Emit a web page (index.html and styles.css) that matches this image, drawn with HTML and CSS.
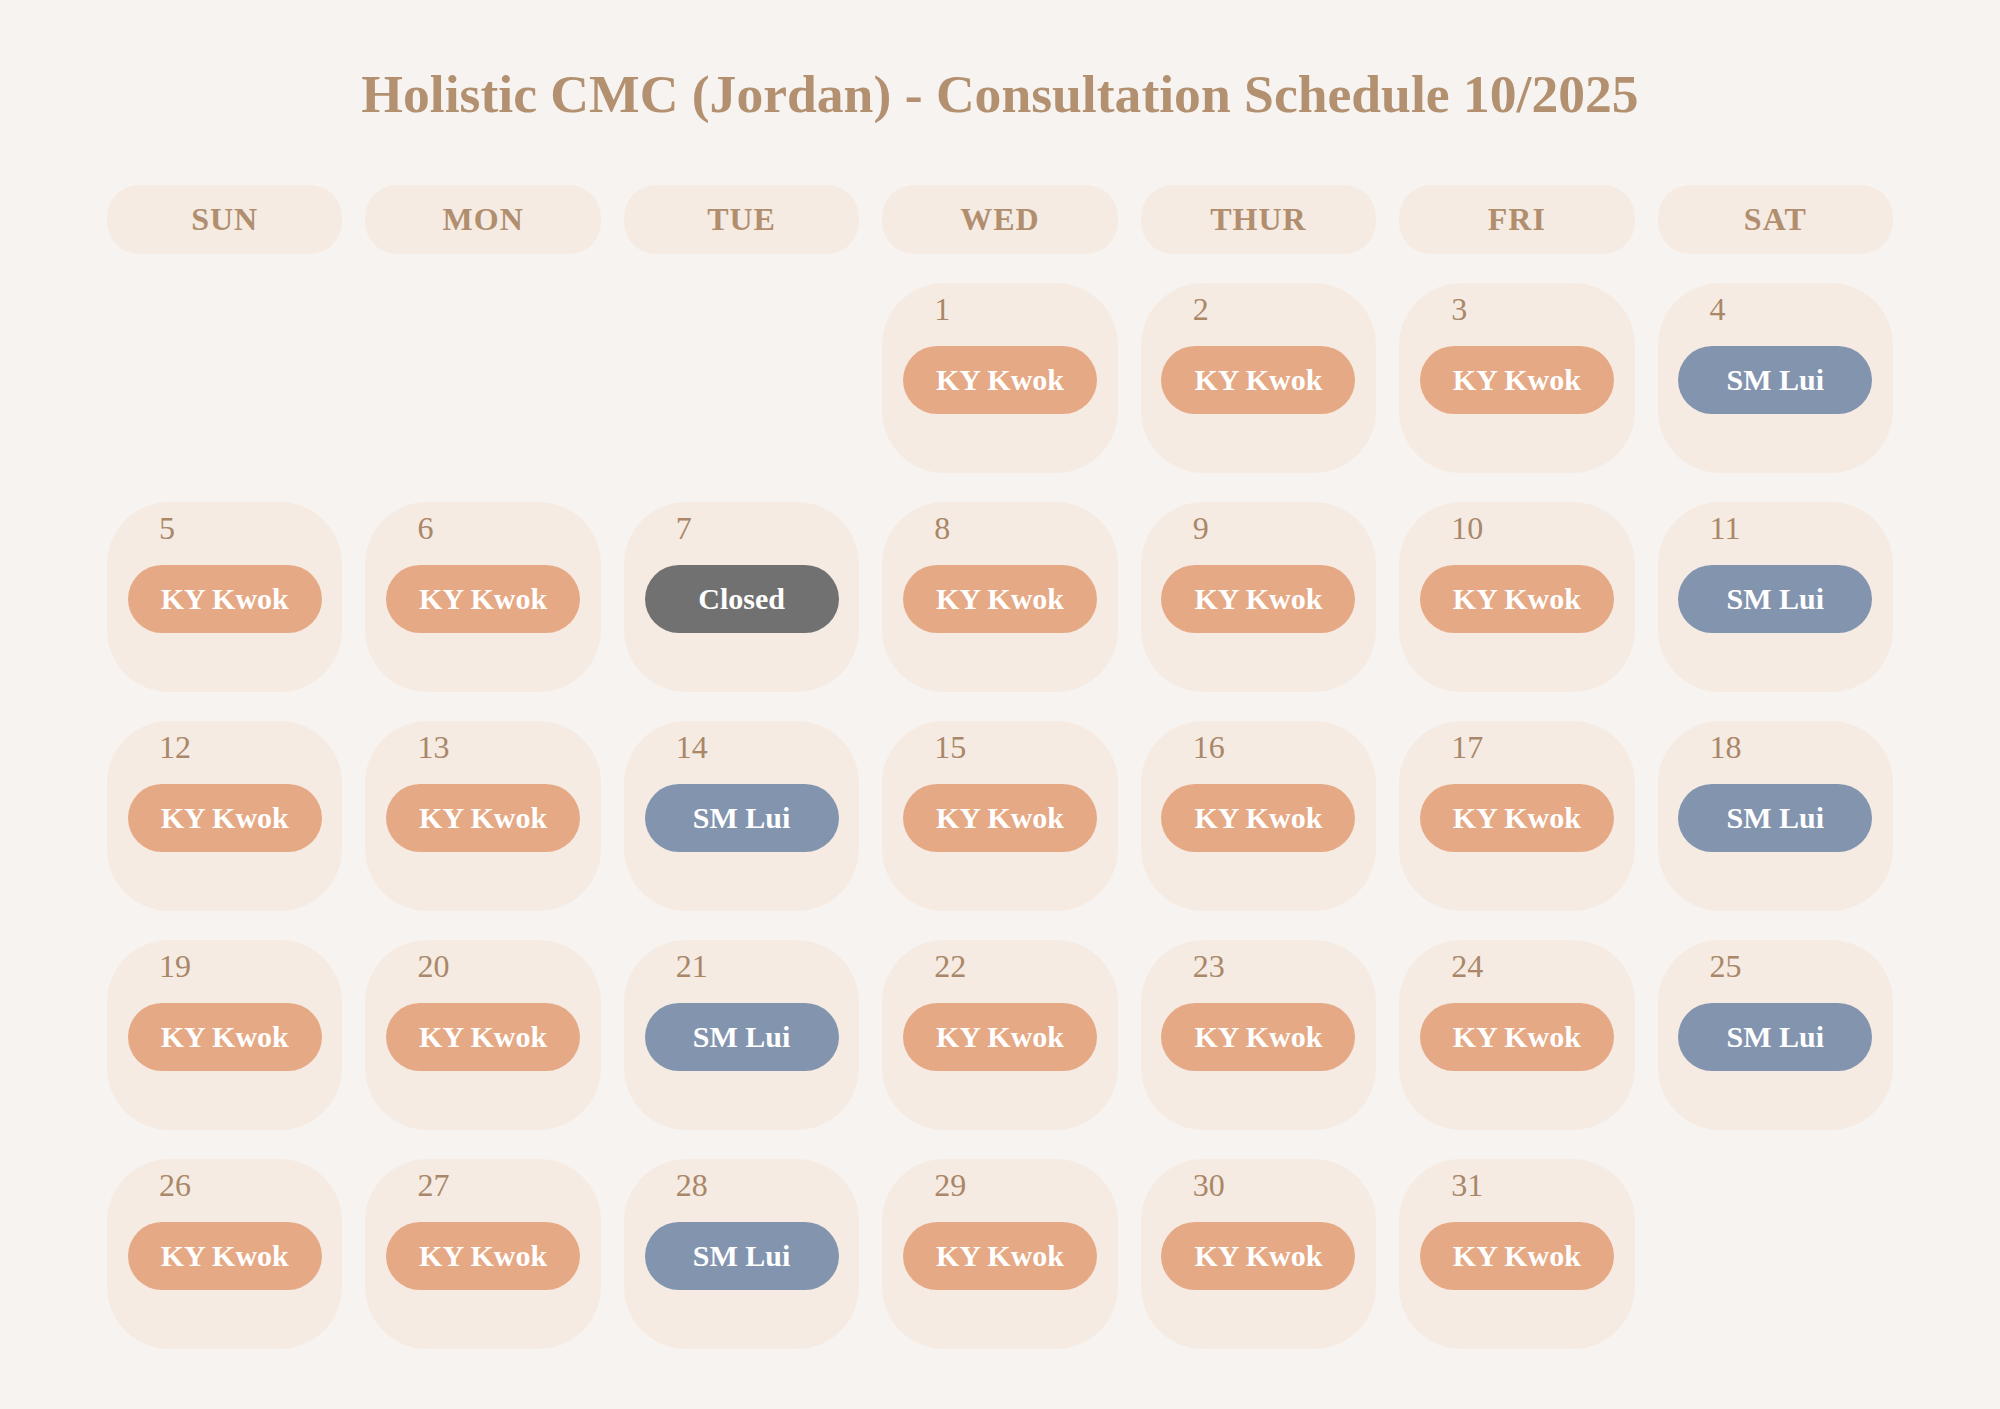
FILE: index.html
```html
<!DOCTYPE html>
<html lang="en">
<head>
<meta charset="utf-8">
<title>Holistic CMC (Jordan) - Consultation Schedule 10/2025</title>
<link rel="stylesheet" href="styles.css">
</head>
<body>
<main class="page">
  <h1 class="title">Holistic CMC (Jordan) - Consultation Schedule 10/2025</h1>
  <div class="calendar">
    <div class="weekday">SUN</div>
    <div class="weekday">MON</div>
    <div class="weekday">TUE</div>
    <div class="weekday">WED</div>
    <div class="weekday">THUR</div>
    <div class="weekday">FRI</div>
    <div class="weekday">SAT</div>

    <div class="blank"></div>
    <div class="blank"></div>
    <div class="blank"></div>
    <div class="day"><span class="num">1</span><span class="doc kwok">KY Kwok</span></div>
    <div class="day"><span class="num">2</span><span class="doc kwok">KY Kwok</span></div>
    <div class="day"><span class="num">3</span><span class="doc kwok">KY Kwok</span></div>
    <div class="day"><span class="num">4</span><span class="doc lui">SM Lui</span></div>

    <div class="day"><span class="num">5</span><span class="doc kwok">KY Kwok</span></div>
    <div class="day"><span class="num">6</span><span class="doc kwok">KY Kwok</span></div>
    <div class="day"><span class="num">7</span><span class="doc closed">Closed</span></div>
    <div class="day"><span class="num">8</span><span class="doc kwok">KY Kwok</span></div>
    <div class="day"><span class="num">9</span><span class="doc kwok">KY Kwok</span></div>
    <div class="day"><span class="num">10</span><span class="doc kwok">KY Kwok</span></div>
    <div class="day"><span class="num">11</span><span class="doc lui">SM Lui</span></div>

    <div class="day"><span class="num">12</span><span class="doc kwok">KY Kwok</span></div>
    <div class="day"><span class="num">13</span><span class="doc kwok">KY Kwok</span></div>
    <div class="day"><span class="num">14</span><span class="doc lui">SM Lui</span></div>
    <div class="day"><span class="num">15</span><span class="doc kwok">KY Kwok</span></div>
    <div class="day"><span class="num">16</span><span class="doc kwok">KY Kwok</span></div>
    <div class="day"><span class="num">17</span><span class="doc kwok">KY Kwok</span></div>
    <div class="day"><span class="num">18</span><span class="doc lui">SM Lui</span></div>

    <div class="day"><span class="num">19</span><span class="doc kwok">KY Kwok</span></div>
    <div class="day"><span class="num">20</span><span class="doc kwok">KY Kwok</span></div>
    <div class="day"><span class="num">21</span><span class="doc lui">SM Lui</span></div>
    <div class="day"><span class="num">22</span><span class="doc kwok">KY Kwok</span></div>
    <div class="day"><span class="num">23</span><span class="doc kwok">KY Kwok</span></div>
    <div class="day"><span class="num">24</span><span class="doc kwok">KY Kwok</span></div>
    <div class="day"><span class="num">25</span><span class="doc lui">SM Lui</span></div>

    <div class="day"><span class="num">26</span><span class="doc kwok">KY Kwok</span></div>
    <div class="day"><span class="num">27</span><span class="doc kwok">KY Kwok</span></div>
    <div class="day"><span class="num">28</span><span class="doc lui">SM Lui</span></div>
    <div class="day"><span class="num">29</span><span class="doc kwok">KY Kwok</span></div>
    <div class="day"><span class="num">30</span><span class="doc kwok">KY Kwok</span></div>
    <div class="day"><span class="num">31</span><span class="doc kwok">KY Kwok</span></div>
    <div class="blank"></div>
  </div>
</main>
</body>
</html>
```
FILE: styles.css
```css
html, body {
  margin: 0;
  padding: 0;
  background: #f7f3f0;
}
body {
  font-family: "Liberation Serif", "Times New Roman", serif;
  width: 2000px;
  height: 1409px;
  overflow: hidden;
}
.page {
  padding: 63px 107px 0;
}
.title {
  margin: 0;
  font-size: 53.6px;
  line-height: 62px;
  font-weight: 700;
  color: #b39170;
  text-align: center;
}
.calendar {
  margin-top: 60px;
  display: grid;
  grid-template-columns: repeat(7, 1fr);
  grid-auto-rows: 190px;
  grid-template-rows: 69px;
  column-gap: 23px;
  row-gap: 29px;
}
.weekday {
  height: 69px;
  margin-bottom: -3px;
  background: #f5ebe3;
  border-radius: 32px;
  display: flex;
  align-items: center;
  justify-content: center;
  font-size: 32px;
  font-weight: 700;
  letter-spacing: 1px;
  color: #b08e6e;
}
.day {
  background: #f5ebe3;
  border-radius: 62px;
  padding-top: 8px;
  display: flex;
  flex-direction: column;
  align-items: center;
}
.num {
  align-self: flex-start;
  margin-left: 52px;
  font-size: 32px;
  line-height: 37px;
  color: #a98768;
}
.doc {
  margin-top: 18px;
  width: 194px;
  height: 68px;
  border-radius: 34px;
  display: flex;
  align-items: center;
  justify-content: center;
  font-size: 30px;
  font-weight: 700;
  color: #ffffff;
}
.kwok { background: #e6a985; }
.lui { background: #8394ae; }
.closed { background: #717171; }
```
